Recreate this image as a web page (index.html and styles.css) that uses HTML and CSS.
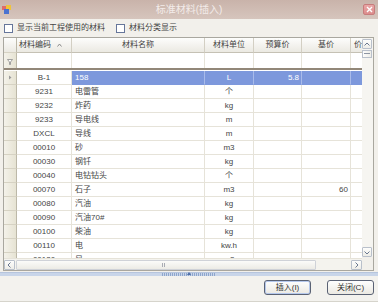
FILE: index.html
```html
<!DOCTYPE html>
<html>
<head>
<meta charset="utf-8">
<link rel="stylesheet" href="styles.css">
</head>
<body>
<div class="window">
  <div class="titlebar">
    <svg class="app-icon" width="9" height="9" viewBox="0 0 9 9">
      <rect x="0" y="1" width="4" height="4" fill="#e06a6a"/>
      <rect x="4" y="0" width="5" height="5" fill="#f0c43a"/>
      <rect x="2" y="4" width="5" height="5" fill="#4a72d0"/>
    </svg>
    <span class="title">标准材料(插入)</span>
    <span class="close"><svg width="7" height="7" viewBox="0 0 7 7"><path d="M1 1L6 6M6 1L1 6" stroke="#fff" stroke-width="1.4"/></svg></span>
  </div>
  <div class="options">
    <label class="chk"><span class="box"></span>显示当前工程使用的材料</label>
    <label class="chk"><span class="box"></span>材料分类显示</label>
  </div>
  <div class="grid">
    <div class="grid-main">
      <div class="view">
        <div class="row head">
          <div class="c rh"></div>
          <div class="c sortcol">材料编码<svg width="5" height="4" viewBox="0 0 5 4"><path d="M0.5 3.5L2.5 1L4.5 3.5" fill="none" stroke="#8a8a8a"/></svg></div>
          <div class="c">材料名称</div>
          <div class="c">材料单位</div>
          <div class="c">预算价</div>
          <div class="c">基价</div>
          <div class="c left">价差</div>
        </div>
        <div class="row filter">
          <div class="c rh"><svg width="6" height="6" viewBox="0 0 6 6"><path d="M0.5 0.5H5.5L3.5 3V5.5H2.5V3Z" fill="#fff" stroke="#8c8c8c" stroke-width="0.8"/></svg></div>
          <div class="c"></div><div class="c"></div><div class="c"></div><div class="c"></div><div class="c"></div><div class="c"></div>
        </div>
        <div class="sep"></div>
        <div class="rows">
          <div class="row data sel">
            <div class="c rh"><svg width="4" height="5" viewBox="0 0 4 5"><path d="M1 0.5L3.5 2.5L1 4.5Z" fill="#9a9a9a"/></svg></div>
            <div class="c code">B-1</div><div class="c name">158</div><div class="c unit">L</div><div class="c num">5.8</div><div class="c num"></div><div class="c"></div>
          </div>
          <div class="row data"><div class="c rh"></div><div class="c code">9231</div><div class="c name">电雷管</div><div class="c unit">个</div><div class="c num"></div><div class="c num"></div><div class="c"></div></div>
          <div class="row data"><div class="c rh"></div><div class="c code">9232</div><div class="c name">炸药</div><div class="c unit">kg</div><div class="c num"></div><div class="c num"></div><div class="c"></div></div>
          <div class="row data"><div class="c rh"></div><div class="c code">9233</div><div class="c name">导电线</div><div class="c unit">m</div><div class="c num"></div><div class="c num"></div><div class="c"></div></div>
          <div class="row data"><div class="c rh"></div><div class="c code">DXCL</div><div class="c name">导线</div><div class="c unit">m</div><div class="c num"></div><div class="c num"></div><div class="c"></div></div>
          <div class="row data"><div class="c rh"></div><div class="c code">00010</div><div class="c name">砂</div><div class="c unit">m3</div><div class="c num"></div><div class="c num"></div><div class="c"></div></div>
          <div class="row data"><div class="c rh"></div><div class="c code">00030</div><div class="c name">钢钎</div><div class="c unit">kg</div><div class="c num"></div><div class="c num"></div><div class="c"></div></div>
          <div class="row data"><div class="c rh"></div><div class="c code">00040</div><div class="c name">电钻钻头</div><div class="c unit">个</div><div class="c num"></div><div class="c num"></div><div class="c"></div></div>
          <div class="row data"><div class="c rh"></div><div class="c code">00070</div><div class="c name">石子</div><div class="c unit">m3</div><div class="c num"></div><div class="c num">60</div><div class="c"></div></div>
          <div class="row data"><div class="c rh"></div><div class="c code">00080</div><div class="c name">汽油</div><div class="c unit">kg</div><div class="c num"></div><div class="c num"></div><div class="c"></div></div>
          <div class="row data"><div class="c rh"></div><div class="c code">00090</div><div class="c name">汽油70#</div><div class="c unit">kg</div><div class="c num"></div><div class="c num"></div><div class="c"></div></div>
          <div class="row data"><div class="c rh"></div><div class="c code">00100</div><div class="c name">柴油</div><div class="c unit">kg</div><div class="c num"></div><div class="c num"></div><div class="c"></div></div>
          <div class="row data"><div class="c rh"></div><div class="c code">00110</div><div class="c name">电</div><div class="c unit">kw.h</div><div class="c num"></div><div class="c num"></div><div class="c"></div></div>
          <div class="row data"><div class="c rh"></div><div class="c code">00120</div><div class="c name">风</div><div class="c unit">m3</div><div class="c num"></div><div class="c num"></div><div class="c"></div></div>
        </div>
      </div>
      <div class="hscroll">
        <span class="sbtn"><svg width="5" height="6" viewBox="0 0 5 6"><path d="M3.5 0.5L1 3L3.5 5.5" fill="none" stroke="#6a7890"/></svg></span>
        <span class="hthumb"><span class="grip-v"></span></span>
        <span class="htrack"></span>
        <span class="sbtn"><svg width="5" height="6" viewBox="0 0 5 6"><path d="M1.5 0.5L4 3L1.5 5.5" fill="none" stroke="#6a7890"/></svg></span>
      </div>
    </div>
    <div class="vscroll">
      <span class="sbtn v"><svg width="6" height="5" viewBox="0 0 6 5"><path d="M0.5 3.5L3 1L5.5 3.5" fill="none" stroke="#6a7890"/></svg></span>
      <span class="vthumb"><span class="grip-h"></span></span>
      <span class="vtrack"></span>
      <span class="sbtn v"><svg width="6" height="5" viewBox="0 0 6 5"><path d="M0.5 1.5L3 4L5.5 1.5" fill="none" stroke="#6a7890"/></svg></span>
      <span class="corner"></span>
    </div>
  </div>
  <div class="splitter"><span class="sgrip"><span class="sarrow"></span></span></div>
  <div class="footer">
    <button class="btn default">插入(I)</button>
    <button class="btn">关闭(C)</button>
  </div>
</div>
</body>
</html>
```
FILE: styles.css
```css
* { box-sizing: border-box; margin: 0; padding: 0; }
body {
  margin: 0;
  font-family: "Liberation Sans", "Noto Sans CJK SC", sans-serif;
  font-size: 8px;
  color: #444;
  background: #f2f0eb;
}
.window {
  width: 378px;
  height: 302px;
  display: flex;
  flex-direction: column;
  background: #f2f0eb;
  overflow: hidden;
}
.titlebar {
  height: 19px;
  flex: none;
  display: grid;
  grid-template-columns: 20px 1fr 20px;
  align-items: center;
  background: linear-gradient(#c9b3aa, #d6c5bd);
}
.app-icon { margin-left: 2px; }
.title {
  text-align: center;
  color: #f3ecea;
  font-size: 10px;
  line-height: 19px;
  font-family: "Liberation Sans", "Noto Sans CJK SC", sans-serif;
}
.close {
  justify-self: end;
  margin-right: 3px;
  width: 12px;
  height: 11px;
  display: flex;
  align-items: center;
  justify-content: center;
  background: linear-gradient(#eaa6a6, #dc8c8c);
  border: 1px solid #c77c7c;
  border-radius: 2px;
}
.options {
  height: 18px;
  flex: none;
  display: flex;
  align-items: center;
  padding-left: 4px;
  gap: 11px;
  color: #444;
}
.chk { display: flex; align-items: center; gap: 4px; line-height: 10px; }
.box { width: 9px; height: 9px; border: 1px solid #66769a; background: #fff; }

.grid {
  height: 234px;
  flex: none;
  margin: 0 4px 0 3px;
  border: 1px solid #a9a79f;
  display: flex;
  background: #fff;
}
.grid-main { width: 358px; display: flex; flex-direction: column; }
.view { height: 220px; overflow: hidden; background: #fff; }

.row {
  display: grid;
  grid-template-columns: 13px 55px 133px 49px 48px 49px 49px;
  width: 396px;
}
.c {
  border-right: 1px solid #e6e3d9;
  border-bottom: 1px solid #e6e3d9;
  white-space: nowrap;
  overflow: hidden;
}
.head .c {
  height: 15px;
  line-height: 14px;
  text-align: center;
  background: linear-gradient(#fdfdfc, #ebe9e2);
  border-right-color: #d3cfc3;
  border-bottom-color: #c5c1b4;
  color: #444;
}
.head .sortcol {
  display: flex;
  align-items: center;
  justify-content: flex-start;
  gap: 6px;
  padding-left: 2px;
}
.head .left { text-align: left; padding-left: 3px; }
.filter .c { height: 15px; border-bottom: none; }
.rh {
  background: linear-gradient(90deg, #f4f2ea, #e6e3d3);
  border-right-color: #bcb8a8 !important;
  border-bottom-color: #d6d2c3 !important;
  display: flex;
  align-items: center;
  justify-content: center;
}
.filter .rh { align-items: flex-end; padding-bottom: 3px; justify-content: flex-start; padding-left: 3px; }
.sep { height: 2px; background: #928778; width: 358px; }
.rows { margin-top: 1px; }
.data .c { height: 14px; line-height: 13px; }
.code { text-align: center; }
.name { padding-left: 3px; }
.unit { text-align: center; }
.num { text-align: right; padding-right: 2px; }
.data .rh { justify-content: flex-start; padding-left: 4px; }
.sel .c:not(.rh):not(.code) {
  background: #7d98dc;
  color: #fff;
  border-right-color: #a9bbea;
  border-bottom-color: #7d98dc;
}

.hscroll {
  height: 12px;
  display: flex;
  align-items: center;
  background: #f4f3ee;
  border-top: 1px solid #e6e3d9;
}
.sbtn {
  width: 11px;
  height: 10px;
  flex: none;
  display: flex;
  align-items: center;
  justify-content: center;
  border: 1px solid #b9c0cb;
  border-radius: 1px;
  background: linear-gradient(#fdfdfc, #eeede8);
}
.hthumb {
  width: 300px;
  height: 10px;
  margin-left: 1px;
  display: flex;
  align-items: center;
  justify-content: center;
  border: 1px solid #cfd2d8;
  border-radius: 1px;
  background: linear-gradient(#fbfbf9, #ecebe5);
}
.grip-v {
  width: 3px;
  height: 4px;
  border-left: 1px solid #a9acb4;
  border-right: 1px solid #a9acb4;
  margin-left: -6px;
}
.htrack { flex: 1; }

.vscroll {
  width: 11px;
  display: flex;
  flex-direction: column;
  background: #f6f5f1;
}
.sbtn.v { width: 10px; height: 10px; margin-top: 1px; }
.vthumb {
  width: 10px;
  height: 8px;
  margin-top: 1px;
  display: flex;
  align-items: center;
  justify-content: center;
  border: 1px solid #b9c0cb;
  background: linear-gradient(90deg, #fdfdfc, #eeede8);
}
.grip-h { width: 6px; height: 2px; border-top: 1px solid #8e96a4; }
.vtrack { flex: 1; }
.corner { height: 13px; background: #f2f0eb; }

.splitter {
  height: 4px;
  flex: none;
  margin-top: 1px;
  background: #c8d5e9;
  border-top: 1px solid #b6c5dd;
  display: flex;
  justify-content: center;
}
.sgrip {
  position: relative;
  width: 54px;
  height: 3px;
  margin-left: -1px;
  background: repeating-linear-gradient(90deg, #8ea6cc 0 1px, transparent 1px 2px);
}
.sarrow {
  position: absolute;
  left: 25px;
  top: -1px;
  width: 0;
  height: 0;
  border-left: 2px solid transparent;
  border-right: 2px solid transparent;
  border-bottom: 3px solid #4f6fa8;
}

.footer {
  flex: 1;
  display: flex;
  justify-content: flex-end;
  align-items: flex-start;
  padding: 4px 4px 0 0;
  gap: 16px;
  background: #f3f2ee;
  border-bottom: 1px solid #d6d4cc;
}
.btn {
  width: 47px;
  height: 15px;
  font-family: "Liberation Sans", "Noto Sans CJK SC", sans-serif;
  font-size: 8px;
  color: #333;
  border: 1px solid #5a6274;
  border-radius: 3px;
  background: linear-gradient(#fefefe, #ebe9e2);
  line-height: 13px;
}
.btn.default { box-shadow: inset 0 0 0 1px #b5c8ec; }
```
